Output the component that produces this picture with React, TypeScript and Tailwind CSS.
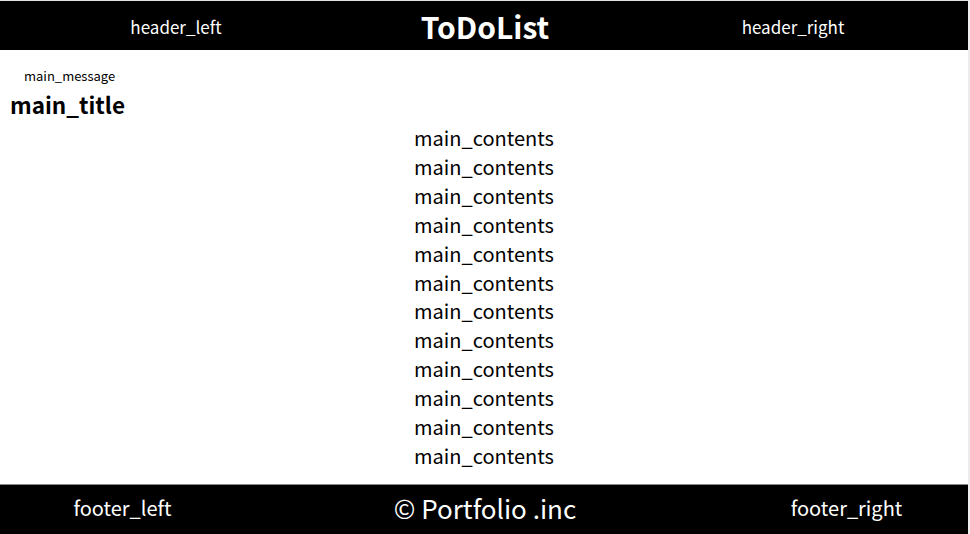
const font = { fontFamily: '"Noto Sans CJK JP", "Noto Sans", sans-serif' }

export default function App() {
  const rows = Array.from({ length: 12 })
  return (
    <div
      className="h-screen flex flex-col bg-white border-t border-[#e3e3e3] border-r-2 border-r-[#ececec] overflow-hidden"
      style={font}
    >
      <header className="h-[49px] shrink-0 bg-black text-white grid grid-cols-[352px_266px_1fr] items-center">
        <div className="text-center text-[17px] leading-none pt-[2px]">header_left</div>
        <h1 className="text-center text-[30px] font-bold leading-none pt-[1px]">ToDoList</h1>
        <div className="text-center text-[17px] leading-none pt-[2px]">header_right</div>
      </header>
      <main className="flex-1 overflow-hidden">
        <p className="pt-[16px] pl-[24px] text-[13px] leading-[20px] text-black">main_message</p>
        <h2 className="mt-[4px] pl-[10px] text-[22.5px] font-bold leading-[28px] text-black">main_title</h2>
        <ul className="mt-[6px] text-center text-[20px] leading-[28.9px] text-black">
          {rows.map((_, i) => (
            <li key={i}>main_contents</li>
          ))}
        </ul>
      </main>
      <footer className="h-[50px] shrink-0 border-t border-[#8a8a8a] bg-black text-white grid grid-cols-[245px_1fr_243px] items-center">
        <div className="text-center text-[20px] leading-none -mt-[3px]">footer_left</div>
        <div className="text-center text-[26px] leading-none -mt-[3px]">© Portfolio .inc</div>
        <div className="text-center text-[20px] leading-none -mt-[3px]">footer_right</div>
      </footer>
    </div>
  )
}
